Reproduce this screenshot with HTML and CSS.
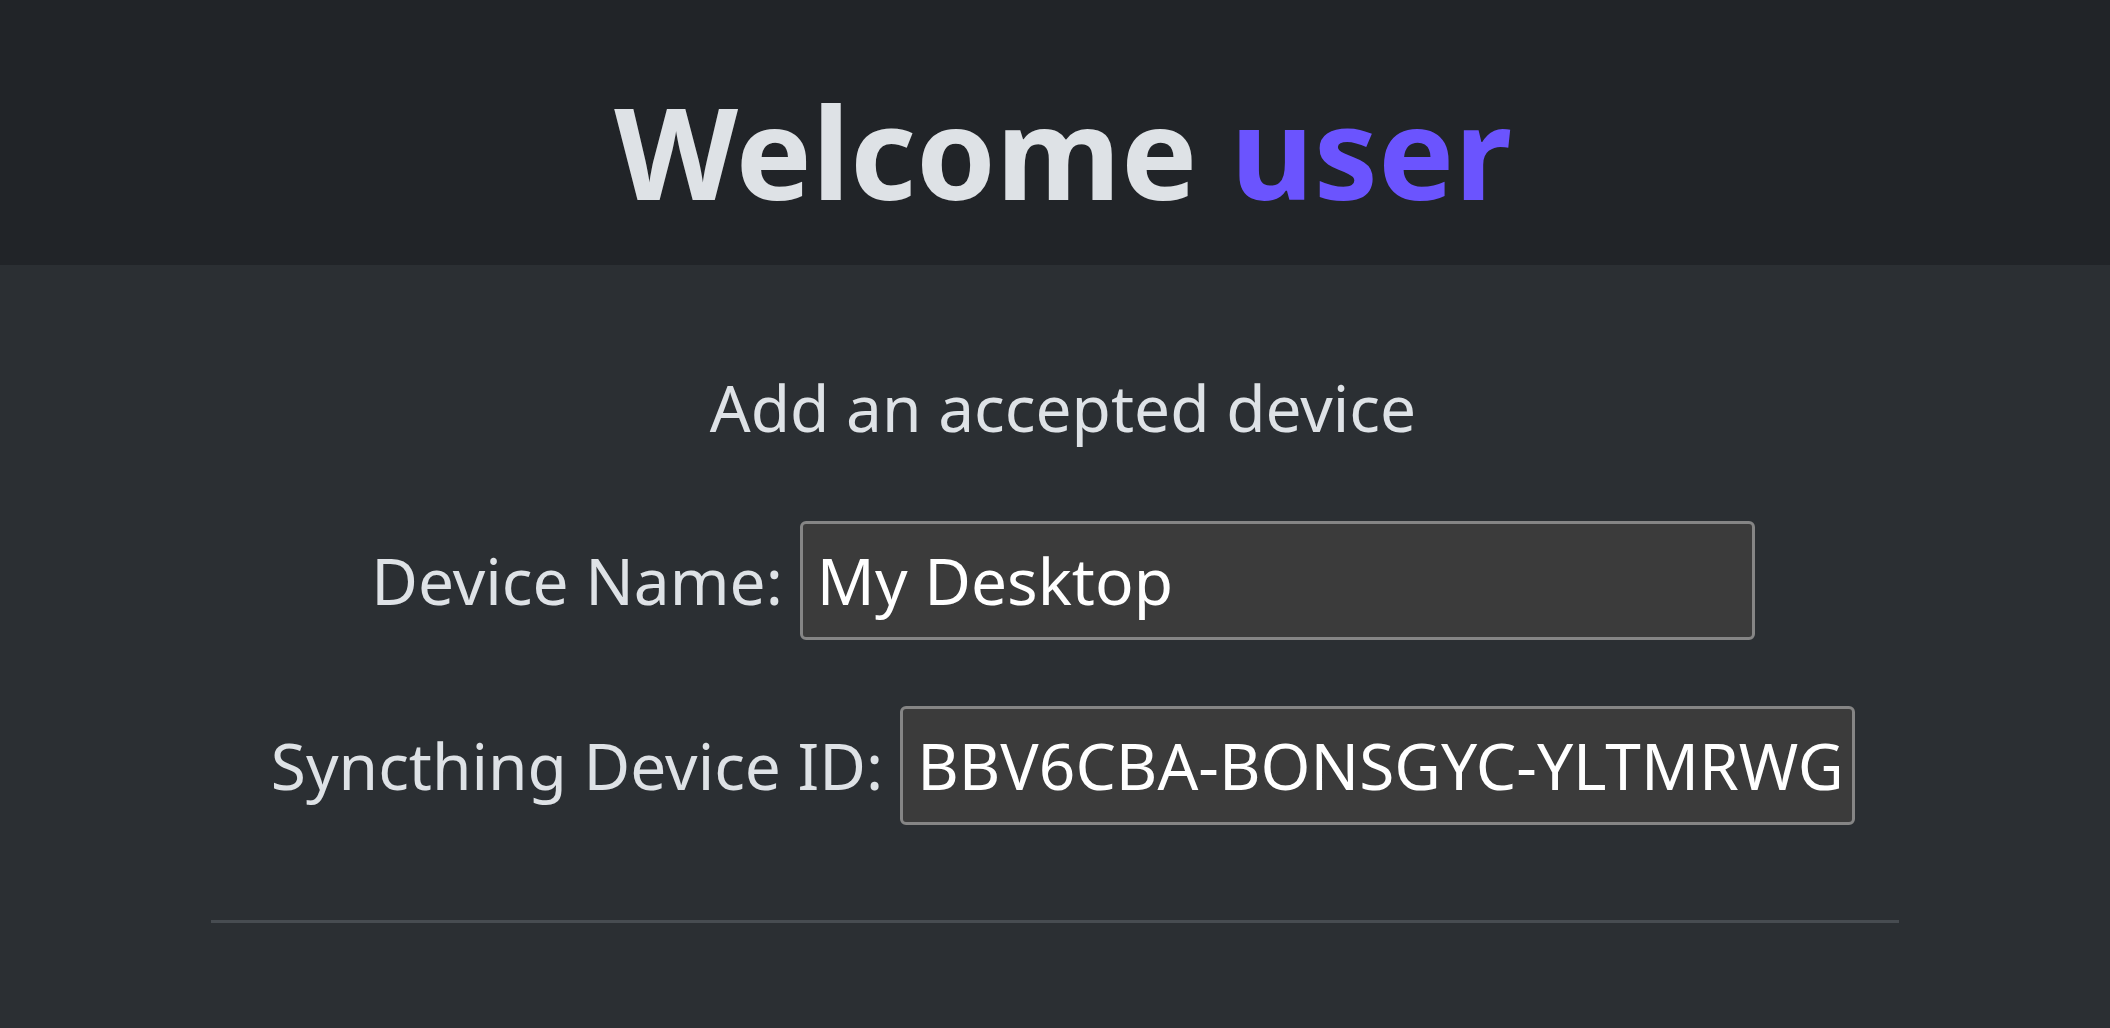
FILE: index.html
```html
<!DOCTYPE html>
<html lang="en">
<head>
<meta charset="utf-8">
<title>Welcome</title>
<link rel="stylesheet" href="styles.css">
</head>
<body>
<header class="top">
  <h1 class="title">Welcome <span class="accent">user</span></h1>
</header>
<main class="content">
  <h2 class="subtitle">Add an accepted device</h2>
  <form class="form">
    <div class="row">
      <label class="label" for="name">Device Name:</label>
      <input class="field" id="name" type="text" value="My Desktop">
    </div>
    <div class="row">
      <label class="label" for="devid">Syncthing Device ID:</label>
      <input class="field" id="devid" type="text" value="BBV6CBA-BONSGYC-YLTMRWG-7XQKZ3P-AH4LJ2D-ON5UW6E-QRSTU2V-WXYZ4AB">
    </div>
  </form>
  <hr class="divider">
</main>
</body>
</html>
```

FILE: styles.css
```css
html, body {
  margin: 0;
  padding: 0;
}
body {
  background: #2b2f33;
  color: #dee2e6;
  font-family: "Noto Sans", "Open Sans", sans-serif;
  min-height: 1028px;
}
.top {
  background: #212428;
  padding: 74px 0 37px 16px;
  text-align: center;
}
.title {
  margin: 0;
  font-size: 128px;
  line-height: 153.6px;
  font-weight: 700;
  color: #dee2e6;
}
.accent {
  color: #6b54fe;
}
.content {
  padding-top: 99px;
}
.subtitle {
  margin: 0;
  padding-left: 16px;
  font-size: 64px;
  line-height: 87px;
  font-weight: 400;
  text-align: center;
  color: #dee2e6;
}
.form {
  margin: 70px 0 0;
  padding-left: 16px;
  display: flex;
  flex-direction: column;
  gap: 66px;
}
.row {
  display: flex;
  justify-content: center;
  align-items: center;
  gap: 17px;
}
.label {
  font-size: 64px;
  line-height: 87px;
  color: #dee2e6;
}
.field {
  box-sizing: border-box;
  width: 955px;
  height: 119px;
  margin: 0;
  padding: 0 13px 0 14px;
  background: #3b3b3b;
  border: 3px solid #858585;
  border-radius: 6px;
  color: #ffffff;
  font-family: "Noto Sans", "Open Sans", sans-serif;
  font-size: 64px;
  line-height: 87px;
  outline: none;
}
.divider {
  width: 80%;
  margin: 95px auto 0;
  height: 0;
  border: 0;
  border-top: 3px solid #474c51;
}
```
